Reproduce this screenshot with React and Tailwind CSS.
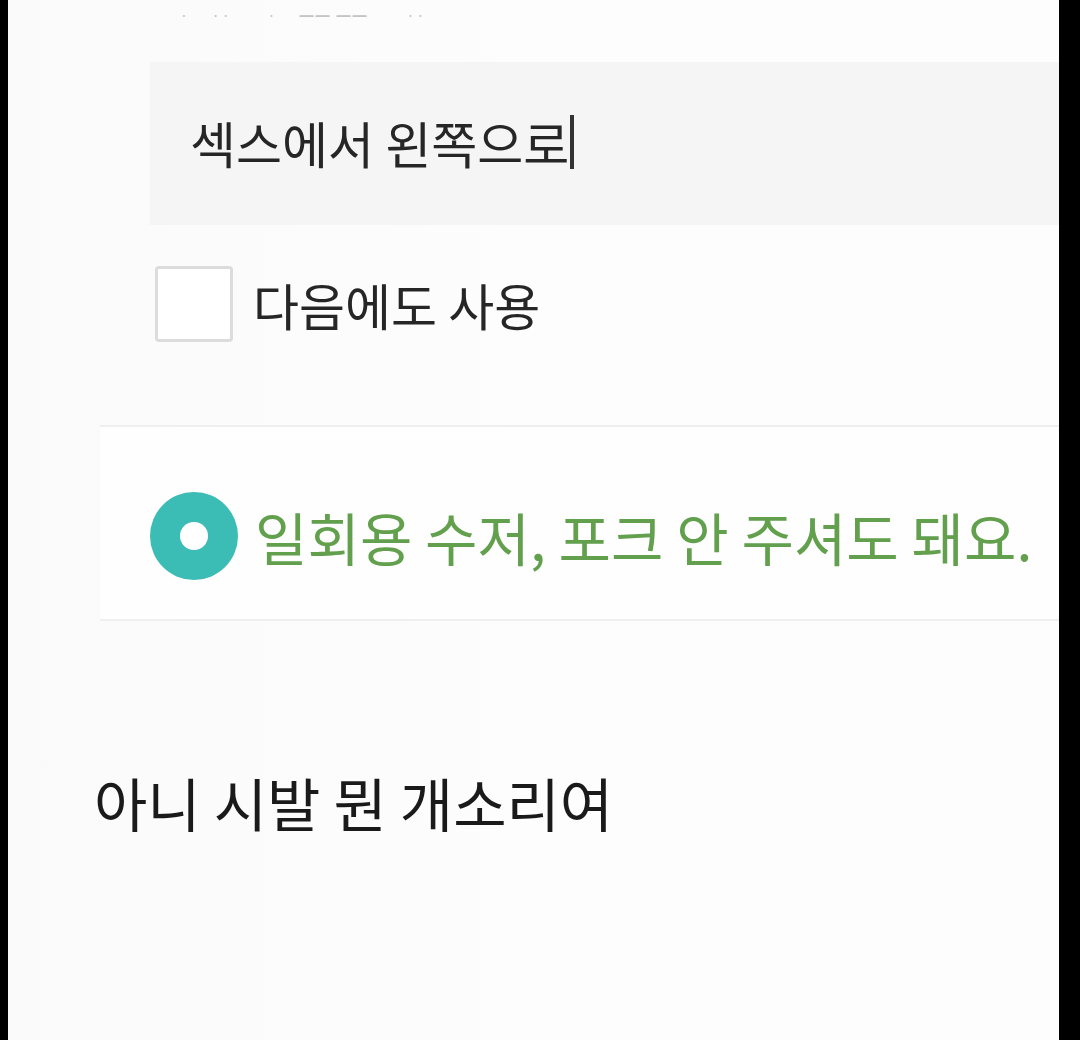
export default function App() {
  const ko = { fontFamily: '"Noto Sans CJK KR", "Noto Sans", sans-serif' };

  return (
    <div className="flex h-[1040px] w-[1080px] overflow-hidden bg-black" style={ko}>
      <div className="w-[8px] shrink-0 bg-black" />

      <div className="flex flex-1 flex-col bg-gradient-to-r from-[#fafafa] via-[#fdfdfd] to-[#fdfdfd]">
        {/* cut-off header text */}
        <div className="flex h-[62px] items-start gap-[22px] pl-[172px] pt-[8px] text-[14px] leading-none tracking-[2px] text-[#c4c4c4]">
          <span>·</span>
          <span>··</span>
          <span className="pl-[14px]">·</span>
          <span>━━ ━━</span>
          <span className="pl-[16px]">··</span>
        </div>

        {/* request input */}
        <div className="ml-[142px] flex h-[163px] items-center bg-[#f5f5f5] pl-[40px] pb-[4px]">
          <span className="text-[50px] leading-none text-[#262626]">섹스에서 왼쪽으로</span>
          <span className="ml-[1px] h-[54px] w-[4px] bg-[#333333]" />
        </div>

        {/* reuse checkbox */}
        <div className="ml-[147px] mt-[40px] flex h-[77px] items-center gap-[20px]">
          <div className="h-[76px] w-[78px] shrink-0 rounded-[4px] border-[3px] border-[#dcdcdc] bg-white" />
          <span className="text-[50px] leading-none text-[#262626]">다음에도 사용</span>
        </div>

        {/* no utensils option */}
        <div className="ml-[92px] mt-[83px] flex h-[196px] items-center border-y-2 border-[#efefef] bg-[#fefefe] pl-[50px] pt-[26px]">
          <div className="flex h-[88px] w-[88px] shrink-0 items-center justify-center rounded-full bg-[#3bbcb4]">
            <div className="h-[28px] w-[28px] rounded-full bg-white" />
          </div>
          <span className="ml-[17px] whitespace-nowrap text-[57px] leading-none text-[#62a04e]">
            일회용 수저, 포크 안 주셔도 돼요.
          </span>
        </div>

        {/* comment */}
        <div className="ml-[86px] mt-[152px] text-[58px] leading-none text-[#1a1a1a]">
          아니 시발 뭔 개소리여
        </div>
      </div>

      <div className="w-[21px] shrink-0 bg-black" />
    </div>
  );
}
